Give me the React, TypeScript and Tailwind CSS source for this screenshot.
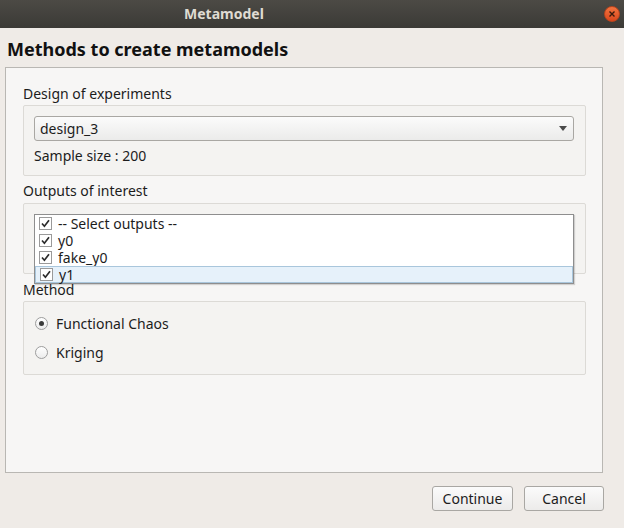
import React from "react";

const font = { fontFamily: '"Noto Sans", "Open Sans", sans-serif' };

function Check() {
  return (
    <div className="w-[13px] h-[13px] border border-[#9a9a9a] bg-white flex items-center justify-center shrink-0">
      <svg width="11" height="11" viewBox="0 0 11 11">
        <path d="M2 5.5 L4.4 8.2 L9 2.2" fill="none" stroke="#2b2b2b" strokeWidth="1.7" />
      </svg>
    </div>
  );
}

function Radio({ checked }: { checked?: boolean }) {
  return (
    <div className="w-[13px] h-[13px] rounded-full border border-[#9d9d9d] bg-gradient-to-b from-white to-[#ececec] flex items-center justify-center shrink-0">
      {checked && <div className="w-[5px] h-[5px] rounded-full bg-[#3a3a3a]" />}
    </div>
  );
}

export default function App() {
  const rows = ["-- Select outputs --", "y0", "fake_y0", "y1"];
  return (
    <div
      className="w-[624px] h-[528px] bg-[#efebe7] flex flex-col text-[#1c1c1c] text-[14px] overflow-hidden"
      style={font}
    >
      {/* title bar */}
      <div className="h-[28px] bg-gradient-to-b from-[#4c4a45] to-[#3b3a36] flex items-center shrink-0">
        <div className="pl-[184px] text-[14px] font-bold text-[#dfdbd2] leading-none">Metamodel</div>
        <div className="flex-1" />
        <div className="mr-[4px] w-[16px] h-[16px] rounded-full bg-gradient-to-b from-[#f2733f] to-[#d9461b] flex items-center justify-center border border-[#b9441d]">
          <svg width="8" height="8" viewBox="0 0 8 8">
            <path d="M1.5 1.5 L6.5 6.5 M6.5 1.5 L1.5 6.5" stroke="#3a1a0c" strokeWidth="1.4" />
          </svg>
        </div>
      </div>

      {/* heading */}
      <div className="h-[39px] pl-[7px] pt-[9px] shrink-0">
        <div className="text-[18px] font-bold leading-[24px] text-[#111]">Methods to create metamodels</div>
      </div>

      {/* main frame */}
      <div className="ml-[5px] w-[598px] h-[406px] border border-[#b9b7b3] bg-[#f7f6f5] flex flex-col pl-[17px] shrink-0">
        <div className="h-[37px] pt-[15px] leading-[22px]">Design of experiments</div>
        <div className="w-[563px] h-[71px] border border-[#dcdad6] bg-[#f4f3f1] rounded-[2px] pl-[10px] pt-[10px] flex flex-col">
          <div className="w-[540px] h-[25px] border border-[#a9a7a3] rounded-[3px] bg-gradient-to-b from-[#fbfbfb] to-[#ebebea] flex items-center pl-[5px] pr-[6px]">
            <span className="flex-1 leading-none">design_3</span>
            <svg width="8" height="5" viewBox="0 0 8 5">
              <path d="M0 0 L8 0 L4 5 Z" fill="#4a4a4a" />
            </svg>
          </div>
          <div className="pt-[4px] leading-[22px]">Sample size : 200</div>
        </div>
        <div className="h-[27px] pt-[5px] leading-[20px]">Outputs of interest</div>
        <div className="w-[563px] h-[71px] border border-[#dcdad6] bg-[#f4f3f1] rounded-[2px] pl-[10px] pt-[10px]">
          <div className="w-[540px] h-[70px] border border-[#8e8e8e] bg-white relative z-10 flex flex-col shadow-[1px_1px_1px_rgba(0,0,0,0.15)]">
            {rows.map((r, i) => (
              <div
                key={r}
                className={
                  "h-[17px] flex items-center pl-[4px] gap-[6px] " +
                  (i === 3 ? "bg-[#e6f1fa] border border-[#a9c6dc] pl-[3px]" : "")
                }
              >
                <Check />
                <span className="leading-[15px]">{r}</span>
              </div>
            ))}
          </div>
        </div>
        <div className="h-[27px] pt-[6px] leading-[20px]">Method</div>
        <div className="w-[563px] h-[74px] border border-[#dcdad6] bg-[#f4f3f1] rounded-[2px] pl-[11px] pt-[15px] flex flex-col gap-[16px]">
          <div className="flex items-center gap-[8px] h-[13px]">
            <Radio checked />
            <span className="leading-none">Functional Chaos</span>
          </div>
          <div className="flex items-center gap-[8px] h-[13px]">
            <Radio />
            <span className="leading-none">Kriging</span>
          </div>
        </div>
      </div>

      {/* buttons */}
      <div className="flex justify-end gap-[11px] pr-[20px] pt-[13px]">
        <button className="w-[81px] h-[25px] border border-[#a9a7a3] rounded-[3px] bg-gradient-to-b from-[#fbfbfb] to-[#ecebea] text-[14px] leading-none text-[#1c1c1c]">
          Continue
        </button>
        <button className="w-[80px] h-[25px] border border-[#a9a7a3] rounded-[3px] bg-gradient-to-b from-[#fbfbfb] to-[#ecebea] text-[14px] leading-none text-[#1c1c1c]">
          Cancel
        </button>
      </div>
    </div>
  );
}
